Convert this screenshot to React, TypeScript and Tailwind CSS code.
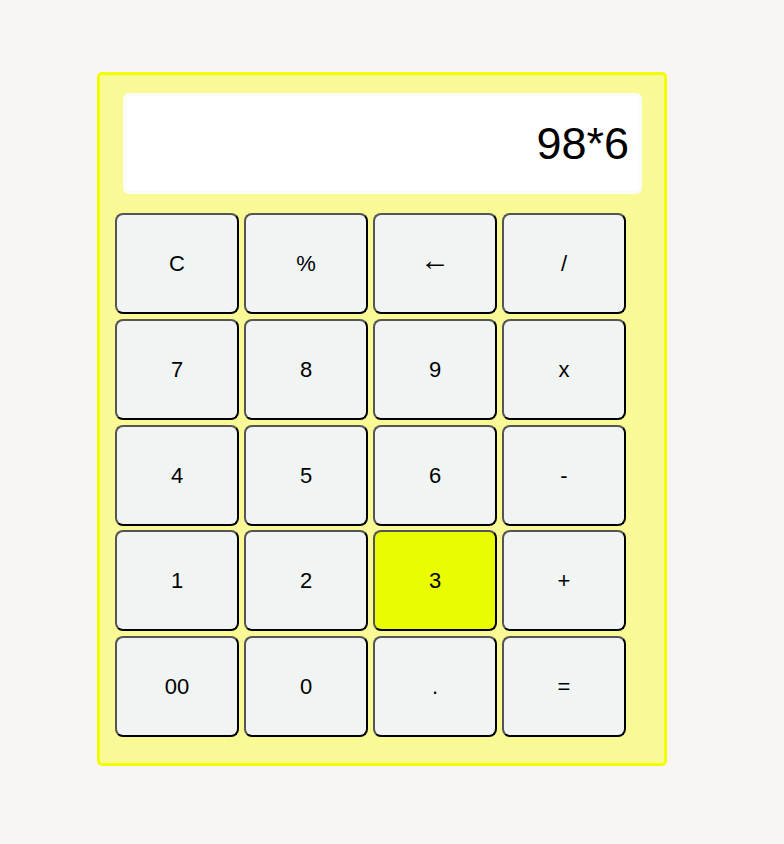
import React, { useState } from "react";

const keys = [
  "C", "%", "←", "/",
  "7", "8", "9", "x",
  "4", "5", "6", "-",
  "1", "2", "3", "+",
  "00", "0", ".", "=",
];

export default function App() {
  const [display] = useState("98*6");
  const active = "3";

  return (
    <div className="min-h-[844px] bg-[#f9f5f5] pl-[97px] pt-[72px] font-['Liberation_Sans',Arial,sans-serif]">
      <div className="h-[694px] w-[570px] rounded-[5px] border-[3px] border-[#f2ff00] bg-[#f9f996] pl-[15px] pt-[18px]">
        <div className="ml-[8px] flex h-[101px] w-[519px] items-center justify-end rounded-[6px] border-[3px] border-[#fbfbf8] bg-white pr-[10px] text-[45px] text-black">
          {display}
        </div>
        <div className="mt-[19px] grid w-[511px] grid-cols-4 gap-x-[5px] gap-y-[4.75px]">
          {keys.map((k) => (
            <button
              key={k}
              className={
                "flex h-[101px] items-center justify-center rounded-[8px] border-2 border-t-[#555] border-l-[#555] border-b-black border-r-black text-[22px] text-black " +
                (k === active ? "bg-[#e9fc00]" : "bg-[#f0f4f3]")
              }
            >
              {k === "←" ? (
                <span className="-translate-y-[4px] font-['Liberation_Serif',serif] text-[30px] leading-none">
                  ←
                </span>
              ) : (
                k
              )}
            </button>
          ))}
        </div>
      </div>
    </div>
  );
}
